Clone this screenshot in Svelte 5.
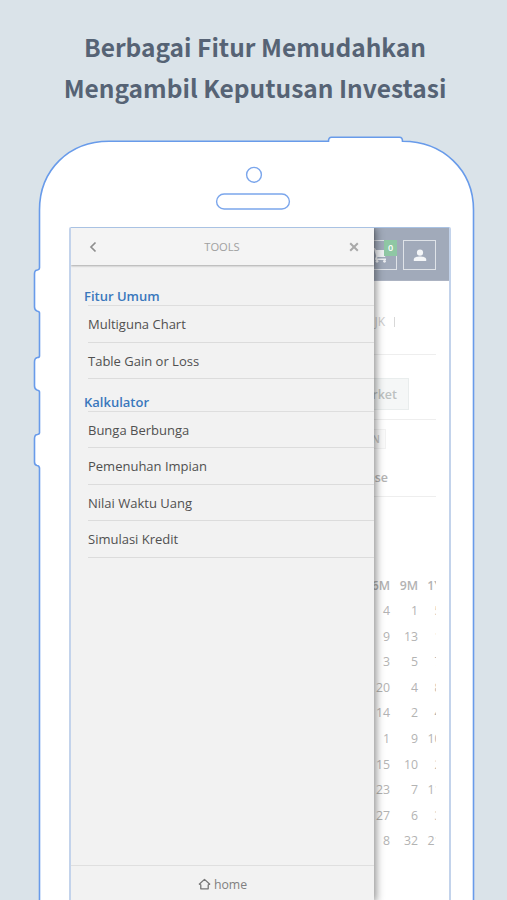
<script lang="ts">
	const groups = [
		{ title: 'Fitur Umum', items: ['Multiguna Chart', 'Table Gain or Loss'] },
		{
			title: 'Kalkulator',
			items: ['Bunga Berbunga', 'Pemenuhan Impian', 'Nilai Waktu Uang', 'Simulasi Kredit']
		}
	];

	const rows = [
		[4, 1, 5],
		[9, 13, 1],
		[3, 5, 7],
		[20, 4, 8],
		[14, 2, 4],
		[1, 9, 10],
		[15, 10, 2],
		[23, 7, 11],
		[27, 6, 3],
		[8, 32, 21]
	];
</script>

<div class="page">
	<h1>Berbagai Fitur Memudahkan<br />Mengambil Keputusan Investasi</h1>

	<svg class="phone" width="507" height="900" viewBox="0 0 507 900">
		<path
			d="M39.5 910V468Q39 465.500 37 465.500Q34.500 465 34.500 462V439Q34.500 434.500 37.500 434.500Q39.500 434 39.500 433V392Q39.500 390.500 37 390Q34.500 389 34.500 386V362Q34.500 358 37.500 357.500Q39.500 357.500 39.500 356V313Q39.500 311.500 37 311Q34.500 310 34.500 307V274Q34.500 270 37.500 270Q39.500 269.500 39.500 268V210C39.500 170 69 141.300 109 141.300H328.500Q328.500 137.300 331.500 137.300H399.500Q402.500 137.300 402.500 141.300C443 141.300 473.500 170 473.500 210V910Z"
			fill="#fff"
			stroke="#689bea"
			stroke-width="1.6"
		/>
		<circle cx="254" cy="174.800" r="7.400" fill="none" stroke="#7ba6ec" stroke-width="1.400" />
		<rect x="216.600" y="194" width="72.800" height="15" rx="7.500" fill="none" stroke="#7ba6ec" stroke-width="1.400" />
	</svg>

	<div class="screen">
		<div class="content">
			<header>
				<div class="box">
					<svg width="17" height="16" viewBox="0 0 17 16" fill="#eef0f3">
						<path d="M0 1h3l1 2h12l-3 7H5.500l-.5 1.500h9V13H3.500l-.5-1 1.300-3L2 2.500H0z" />
						<circle cx="5" cy="14.300" r="1.400" />
						<circle cx="12.500" cy="14.300" r="1.400" />
					</svg>
					<span class="badge">0</span>
				</div>
				<div class="box">
					<svg width="14" height="14" viewBox="0 0 14 14" fill="#f4f6f8">
						<circle cx="7" cy="4.700" r="3.100" />
						<path d="M.8 13v-1.500C.8 9.200 4 8.500 7 8.500s6.200 .7 6.200 3V13z" />
					</svg>
				</div>
			</header>
			<div class="ticker"><span>UNTR.JK</span></div>
			<div class="tabs"><span class="tab">Market</span></div>
			<div class="filter"><span>IDN</span></div>
			<div class="close">Close</div>
			<div class="table">
				<div class="row head"><span>6M</span><span>9M</span><span>1Y</span></div>
				{#each rows as row}
					<div class="row">
						{#each row as cell}
							<span>{cell}</span>
						{/each}
					</div>
				{/each}
			</div>
		</div>

		<div class="drawer">
			<div class="bar">
				<svg width="8" height="12" viewBox="0 0 8 12" fill="none" stroke="#8e8e8e" stroke-width="1.700">
					<path d="M6.500 1.500 2 6l4.500 4.500" />
				</svg>
				<span>TOOLS</span>
				<svg width="10" height="10" viewBox="0 0 10 10" fill="none" stroke="#a9a9a9" stroke-width="2">
					<path d="M1.200 1.200l7.600 7.600M8.800 1.200 1.200 8.800" />
				</svg>
			</div>
			<nav>
				{#each groups as group}
					<h2>{group.title}</h2>
					<ul>
						{#each group.items as item}
							<li>{item}</li>
						{/each}
					</ul>
				{/each}
			</nav>
			<footer>
				<svg width="13" height="12" viewBox="0 0 14 12" fill="none" stroke="#777" stroke-width="1.400" stroke-linejoin="round">
					<path d="M3 6.500v4.700h8V6.500M1 6.500h2M11 6.500h2M1 6.500l6-5.500 6 5.500" />
				</svg>
				<span>home</span>
			</footer>
		</div>
	</div>
</div>

<style>
	:global(body) {
		margin: 0;
	}

	.page {
		position: relative;
		box-sizing: border-box;
		width: 507px;
		height: 900px;
		overflow: hidden;
		background: #dae3e9;
		font-family: 'Open Sans', 'Noto Sans', sans-serif;
	}

	h1 {
		height: 227px;
		box-sizing: border-box;
		margin: 0;
		padding: 27px 0 0 3px;
		font-family: 'Noto Sans CJK SC', 'Open Sans', sans-serif;
		font-size: 24.500px;
		font-weight: 700;
		line-height: 40.500px;
		text-align: center;
		white-space: nowrap;
		color: #566375;
	}

	.phone {
		position: absolute;
		top: 0;
		left: 0;
	}

	.screen {
		position: relative;
		box-sizing: border-box;
		width: 382px;
		height: 680px;
		margin-left: 69px;
		border: 2px solid #c3d3eb;
		border-top: 1px solid #a9c2e3;
		border-radius: 2px 2px 0 0;
		background: #fff;
		overflow: hidden;
	}

	.content {
		height: 100%;
		color: #b3b3b3;
	}

	header {
		display: flex;
		justify-content: flex-end;
		gap: 6px;
		height: 53px;
		box-sizing: border-box;
		padding: 12px 13px 0 0;
		background: #a1aaba;
		border-bottom: 1px solid #acb3c2;
	}

	.box {
		position: relative;
		display: flex;
		align-items: center;
		justify-content: center;
		box-sizing: border-box;
		width: 33px;
		height: 30px;
		border: 1px solid #dfe3e8;
	}

	.badge {
		position: absolute;
		top: -1px;
		right: -1px;
		width: 13px;
		height: 16px;
		background: #8fc7a4;
		color: #fff;
		font-size: 9px;
		font-weight: 600;
		line-height: 16px;
		text-align: center;
	}

	.ticker,
	.tabs,
	.filter,
	.close {
		box-sizing: border-box;
		margin-right: 13px;
		text-align: right;
		font-size: 12px;
	}

	.ticker {
		height: 74px;
		padding: 32px 41px 0 0;
		line-height: 17px;
		color: #ccc;
		border-bottom: 1px solid #eee;
	}

	.ticker span {
		display: inline-block;
		height: 10px;
		padding-right: 9px;
		border-right: 1px solid #d8d8d8;
		line-height: 10px;
		white-space: nowrap;
	}

	.tabs {
		height: 65px;
		padding: 23px 27px 0 0;
		border-bottom: 1px solid #eee;
	}

	.tab {
		display: inline-block;
		box-sizing: border-box;
		height: 32px;
		padding: 0 11px;
		border: 1px solid #e9eded;
		background: #f5f7f7;
		font-size: 12.500px;
		font-weight: 600;
		line-height: 31px;
		color: #bcc1c0;
	}

	.filter {
		height: 45px;
		padding: 9px 50px 0 0;
	}

	.filter span {
		display: inline-block;
		height: 18px;
		padding: 0 5px;
		border: 1px solid #f2f2f2;
		background: #fbfbfb;
		font-size: 10.500px;
		font-weight: 600;
		line-height: 18px;
		color: #c4c4c4;
	}

	.close {
		height: 32px;
		padding: 4px 48px 0 0;
		font-size: 12.500px;
		font-weight: 600;
		line-height: 18px;
		border-bottom: 1px solid #eee;
	}

	.table {
		width: 76px;
		margin: 77px 13px 0 auto;
		overflow: hidden;
	}

	.row {
		display: grid;
		grid-template-columns: 30px 28px 23.500px;
		height: 25.600px;
		font-size: 12.300px;
		line-height: 25.600px;
		text-align: right;
	}

	.head {
		height: 24px;
		line-height: 24px;
		font-weight: 600;
	}

	.drawer {
		position: absolute;
		top: 0;
		left: 0;
		display: flex;
		flex-direction: column;
		width: 303px;
		height: 674px;
		background: #f2f2f2;
		box-shadow: 2px 0 8px rgba(0, 0, 0, 0.45);
	}

	.bar {
		display: flex;
		align-items: center;
		justify-content: space-between;
		height: 37px;
		box-sizing: border-box;
		padding: 0 15px 0 18px;
		background: #f4f4f4;
		box-shadow: 0 1px 2px rgba(0, 0, 0, 0.3);
		font-size: 11.200px;
		color: #a0a0a0;
	}

	.bar span {
		margin-right: 2px;
	}

	nav {
		flex: 1;
		padding-top: 22px;
	}

	h2 {
		margin: 0 0 0 13px;
		height: 18px;
		font-size: 13px;
		font-weight: 600;
		line-height: 19px;
		color: #3a78bd;
	}

	ul {
		list-style: none;
		margin: 0 0 13.500px 17px;
		padding: 0;
		border-top: 1px solid #dedede;
	}

	li {
		box-sizing: border-box;
		height: 36.500px;
		border-bottom: 1px solid #dcdcdc;
		font-size: 13px;
		line-height: 36px;
		color: #505050;
	}

	footer {
		display: flex;
		align-items: center;
		justify-content: center;
		gap: 3px;
		height: 36px;
		border-top: 1px solid #dfdfdf;
		font-size: 12.300px;
		color: #808080;
	}
</style>
